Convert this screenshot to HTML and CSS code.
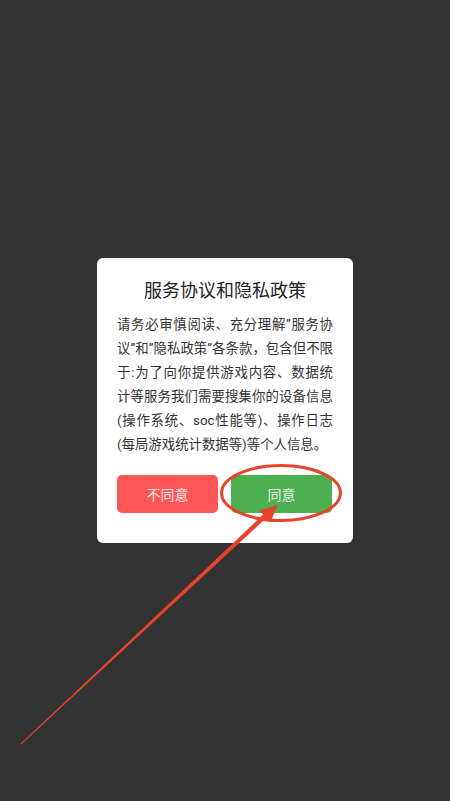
FILE: index.html
```html
<!DOCTYPE html>
<html lang="zh-CN">
<head>
<meta charset="utf-8">
<title>服务协议和隐私政策</title>
<link rel="stylesheet" href="styles.css">
</head>
<body>
<div class="screen">
  <div class="dialog">
    <h1 class="title">服务协议和隐私政策</h1>
    <p class="body">请务必审慎阅读、充分理解”服务协议”和”隐私政策”各条款，包含但不限于:为了向你提供游戏内容、数据统计等服务我们需要搜集你的设备信息(操作系统、soc性能等)、操作日志(每局游戏统计数据等)等个人信息。</p>
    <div class="actions">
      <button class="btn btn-deny">不同意</button>
      <button class="btn btn-agree">同意</button>
    </div>
  </div>
  <svg class="annot" width="450" height="801" viewBox="0 0 450 801">
    <ellipse cx="281" cy="493" rx="59.5" ry="27.5" fill="none" stroke="#e8432c" stroke-width="3"/>
    <polygon fill="#e8432c" points="277.5,505 259.1,510.6 263.2,514.6 20.6,743.7 21.4,744.3 266.2,518.1 270.4,522.6"/>
  </svg>
</div>
</body>
</html>
```
FILE: styles.css
```css
html, body {
  margin: 0;
  padding: 0;
}
body {
  background: #333333;
  font-family: Roboto, "Noto Sans CJK SC", sans-serif;
}
.screen {
  position: relative;
  width: 450px;
  height: 801px;
  display: flex;
  align-items: center;
  justify-content: center;
}
.dialog {
  width: 256px;
  height: 285px;
  box-sizing: border-box;
  background: #ffffff;
  border-radius: 6px;
  padding: 19px 20px 0 20px;
  display: flex;
  flex-direction: column;
}
.title {
  margin: 0;
  font-size: 18px;
  line-height: 28px;
  font-weight: 400;
  color: #222222;
  text-align: center;
}
.body {
  margin: 8px 0 0 0;
  font-size: 13.4px;
  line-height: 24px;
  color: #333333;
  text-align: justify;
}
.actions {
  margin-top: 18px;
  display: flex;
  gap: 13px;
  padding-right: 1px;
}
.btn {
  flex: 1;
  height: 38px;
  border: none;
  border-radius: 5px;
  font-family: Roboto, "Noto Sans CJK SC", sans-serif;
  font-size: 14px;
  color: rgba(255, 255, 255, 0.9);
  padding: 0;
}
.btn-deny {
  background: #ff5555;
}
.btn-agree {
  background: #4caf50;
}
.annot {
  position: absolute;
  left: 0;
  top: 0;
  pointer-events: none;
}
```
